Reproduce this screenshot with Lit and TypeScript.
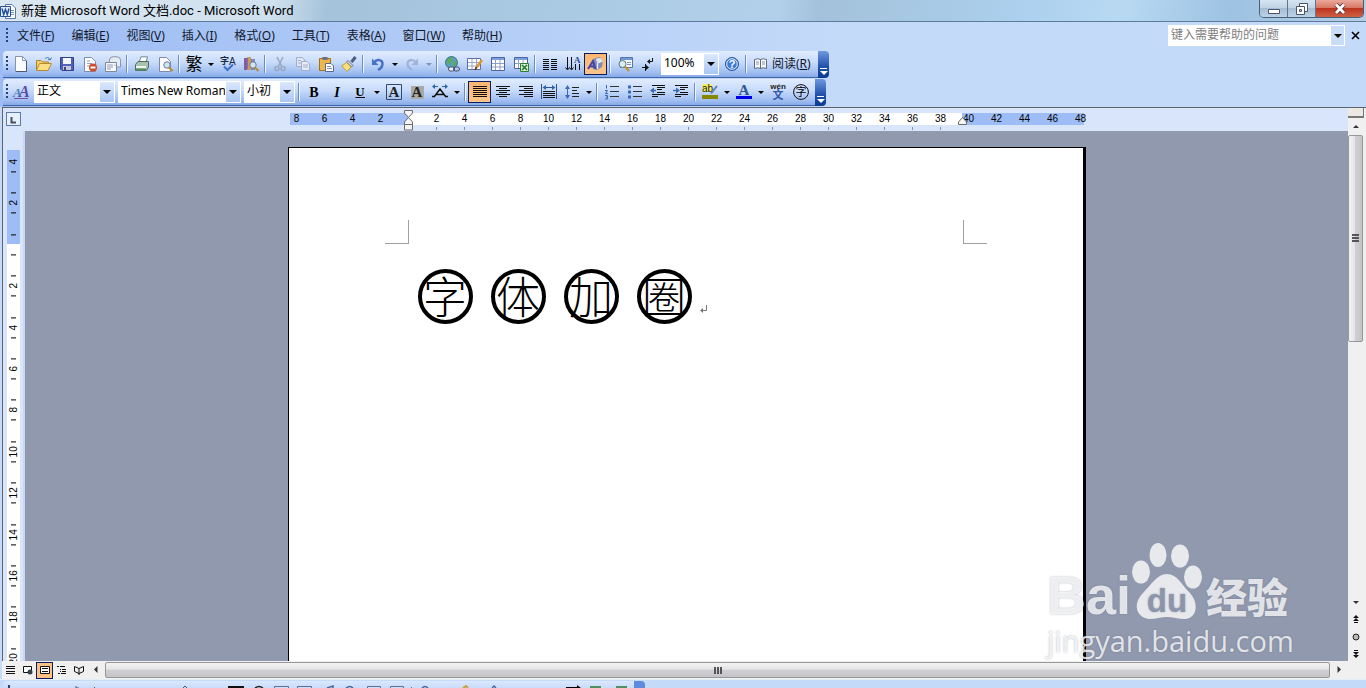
import { LitElement, html, css, svg, nothing } from "lit";
import { customElement, property } from "lit/decorators.js";
import { styleMap } from "lit/directives/style-map.js";

const line = (d: string, c = "#000", w = 1) =>
  svg`<path d=${d} fill="none" stroke=${c} stroke-width=${w}></path>`;
const fill = (d: string, c: string) => svg`<path d=${d} fill=${c}></path>`;
const shape = (d: string, f: string, s: string) =>
  svg`<path d=${d} fill=${f} stroke=${s}></path>`;

const sheet = shape("M2.500 1.500H9.500L13.500 5.500V15.500H2.500Z", "#fdfdff", "#7d8aa8");
const lens = svg`<circle cx="10" cy="9" r="3.200" fill="#cfe4f4" stroke="#6c7c8c"></circle>${line("M12 11.500L15.500 15", "#b98a2c", 2)}`;

const ICONS: Record<string, unknown> = {
  fresh: [shape("M2.500 .5H9.500L13.500 4.500V15.500H2.500Z", "#fbfcff", "#8893ad"), line("M9.500 .5V4.500H13.500", "#8893ad"), line("M13.500 5V15.500H3", "#4b5875")],
  open: [line("M9 3C10 1 13 1 14 3.500M15.500 1.500L14.300 4L12 3", "#4a78a8"), shape("M.5 13.500V4.500H5L6.500 6H12.500V8", "#f5d06c", "#ad8126"), shape("M.5 14.500L3.500 7.500H15.500L12 14.500Z", "#fbdd83", "#b98d2e")],
  save: [shape("M1.500 1.500H14.500V14.500H3L1.500 13Z", "#5360b4", "#343f8c"), fill("M4 2H12V8H4Z", "#f3f6ff"), fill("M4 10H12V14H4Z", "#c3c8de"), fill("M5 11H7V14H5Z", "#39437f")],
  perm: [sheet, line("M5 5H8M5 7.500H10M5 10H8", "#8fa3c4"), svg`<circle cx="11" cy="11.500" r="4" fill="#cf4b2b"></circle>`, fill("M8.500 10.500H13.500V12.500H8.500Z", "#fff")],
  mail: [shape("M4.500 7V4Q4.500 .8 8 .8H12Q15.500 1 15.500 4V11H10", "#e7ebf2", "#8b96aa"), shape("M.5 6.500H11.500V15.500H.5Z", "#fafbff", "#7c88a0"), line("M2 9H8M2 11H8M2 13H6M10 8.500V10", "#8f9bb0")],
  print: [shape("M5 6.500L7 .8H13.500L12 6.500Z", "#fff", "#6f8a93"), shape("M1.500 8.500L4 5.500H14.500L14.500 11L12.500 14.500H1.500Z", "#a7c3b0", "#4c6a60"), fill("M2 10H12V12H2Z", "#eef4ef"), fill("M2 12.500H12V14.500H2Z", "#588f62")],
  preview: [sheet, lens],
  trad: svg`<text x="8" y="14" text-anchor="middle" font-size="17" font-family="Noto Sans CJK SC, sans-serif">繁</text>`,
  spell: [svg`<text x="0" y="8" font-size="9" font-weight="700" font-family="Noto Sans CJK SC, sans-serif" fill="#1b2945">字</text><text x="9" y="9" font-size="10" font-family="Liberation Sans, sans-serif" fill="#1b2945">A</text>`, line("M4 10.500L7.500 14L13 8.500", "#3d6fc9", 2)],
  research: [fill("M1 2H4V14H1Z", "#8358a4"), fill("M4 1H8V14H4Z", "#c79c5a"), fill("M8 3H12V14H8Z", "#7d8dbd"), line("M4.500 2V13M8.500 3V13", "#8a7396"), lens],
  cut: [line("M5 1L9.500 10M11 1L6.500 10", "#9aa7c2", 1.6), svg`<circle cx="5" cy="12.500" r="2" fill="none" stroke="#9aa7c2" stroke-width="1.600"></circle><circle cx="11" cy="12.500" r="2" fill="none" stroke="#9aa7c2" stroke-width="1.600"></circle>`],
  copy: [shape("M1.500 1.500H7.500L9.500 4V10.500H1.500Z", "#dfe7f6", "#a3afca"), shape("M6.500 5.500H12L14.500 8V14.500H6.500Z", "#e6edf9", "#a3afca"), line("M8 9H13M8 11H13M3 4.500H6M3 7H6", "#a3afca")],
  paste: [shape("M1.500 2.500H12.500V14.500H1.500Z", "#f0b64a", "#a56f1c"), fill("M4.500 1H9.500V4H4.500Z", "#67718c"), shape("M7.500 7.500H13L15.500 10V15.500H7.500Z", "#fff", "#5a6a90"), line("M9 10.500H13M9 12.500H14", "#7f92bb")],
  brush: [line("M14.500 1L10.500 6", "#4d5a83", 3), shape("M7 4.500L12 9.500L10.500 11L5.500 6Z", "#cfd6e4", "#6b7389"), shape("M5.500 6.500L10 11L6 15.500L.8 10Z", "#f9e27d", "#c09a31")],
  undo: [line("M4 6.500C7 2.500 13 3.500 12.500 8.500Q12 12 8 14", "#4771c9", 2.4), fill("M2 2.500V9H8.500Z", "#4771c9")],
  redo: [line("M12 6.500C9 2.500 3 3.500 3.500 8.500Q4 12 8 14", "#9fb3d8", 2.2), fill("M14 2.500V9H7.500Z", "#9fb3d8")],
  link: [svg`<circle cx="7.500" cy="6.500" r="6" fill="#5a9fbd" stroke="#38718d"></circle>`, fill("M3 3Q7 0 9 3L7 7L3 8Z", "#5eaa5c"), fill("M9 6L13 5L12 9L9 11Z", "#5eaa5c"), svg`<rect x="4.500" y="11" width="6" height="4" rx="2" fill="#eef" stroke="#454f68"></rect><rect x="9.500" y="11" width="6" height="4" rx="2" fill="none" stroke="#454f68"></rect>`],
  tables: [shape("M.5 2.500H13.500V13.500H.5Z", "#fff", "#5d6fa0"), line("M1 6.500H13M1 10H13M5 3V13M9.500 3V13", "#9aa9cb"), line("M15 4L9 12", "#d99b33", 2.6), line("M9.500 11L8 14", "#503a20", 1.5)],
  table: [shape("M1.500 1.500H14.500V14.500H1.500Z", "#fff", "#4d64a1"), fill("M2 2H14V4H2Z", "#7c9fe0"), line("M2 7.500H14M2 11H14M5.500 4V14M10 4V14", "#8da0cb")],
  excel: [shape("M1.500 1.500H14.500V12.500H1.500Z", "#fff", "#4d64a1"), fill("M2 2H14V4H2Z", "#7c9fe0"), line("M2 7.500H14M5.500 4V12M10 4V12", "#8da0cb"), shape("M7.500 7.500H15.500V15.500H7.500Z", "#d9f0d2", "#2f7d35"), line("M9 9L14 14M14 9L9 14", "#1f7a2b", 1.6)],
  columns: line("M1 3.500H7M1 5.500H7M1 7.500H7M1 9.500H7M1 11.500H7M1 13.500H7M9 3.500H15M9 5.500H15M9 7.500H15M9 9.500H15M9 11.500H15M9 13.500H15", "#111"),
  vtext: [line("M2.500 1V13M6.500 1V13M10.500 8V14M14.500 8V14", "#111"), line("M.5 11.500L2.500 14L4.500 11.500M4.500 11.500L6.500 14L8.500 11.500", "#111"), svg`<text x="9" y="7" font-size="9" font-weight="700" font-family="Liberation Serif, serif" fill="#2e4b93">A</text>`],
  drawing: [fill("M4 8L7 2L12 1L15 5L14 11L9 14L5 13Z", "#7d8db8"), svg`<ellipse cx="11" cy="4" rx="3" ry="2" fill="#dfe6f5"></ellipse>`, line("M9.500 13V7L15 5", "#e8ecf6", 1.3), line("M0 13L5 5L7.500 13M2.500 10.500H7", "#4a45a8", 2)],
  docmap: [shape("M3.500 1.500H15.500V11.500H3.500Z", "#f3f7ff", "#5b74a4"), fill("M4 2H15V4H4Z", "#6f99d8"), line("M10 6.500H14M10 8.500H14", "#7f92bb"), svg`<circle cx="5.500" cy="8" r="3.500" fill="#d8efee" stroke="#5f7b80"></circle>`, line("M8 10.500L12 15", "#c49330", 2.2)],
  marks: [line("M12.500 2V5.500H8", "#111"), fill("M10 3V8L7 5.500Z", "#111"), line("M2 11.500H7M5.500 8V15", "#111"), fill("M6 9V14L9 11.500Z", "#111")],
  help: [svg`<circle cx="8" cy="8" r="6.500" fill="#3d7ad6" stroke="#2a5298"></circle><circle cx="8" cy="8" r="5.300" fill="none" stroke="#e8f1ff"></circle><text x="8" y="12" text-anchor="middle" font-size="11" font-weight="700" font-family="Liberation Sans, sans-serif" fill="#fff">?</text>`],
  book: [shape("M1.500 3.500Q5 2 7.500 3.500V12.500Q5 11 1.500 12.500ZM7.500 3.500Q10 2 13.500 3.500V12.500Q10 11 7.500 12.500Z", "#f6f8fc", "#5f6a7e"), line("M3 6H6M3 8H6M9 6H12M9 8H12", "#8a94a8")],
  styles: [svg`<text x="0" y="13" font-size="13" font-weight="700" font-style="italic" font-family="Liberation Serif, serif" fill="#4a7fb0">A</text><text x="6" y="13" font-size="16" font-weight="700" font-style="italic" font-family="Liberation Serif, serif" fill="#5a4ba8">A</text>`, line("M1 14.500H15", "#7a4ba8")],
  bold: svg`<text x="8" y="13" text-anchor="middle" font-size="14" font-weight="700" font-family="Liberation Serif, serif">B</text>`,
  italic: svg`<text x="8" y="13" text-anchor="middle" font-size="14" font-weight="700" font-style="italic" font-family="Liberation Serif, serif">I</text>`,
  under: [svg`<text x="8" y="12" text-anchor="middle" font-size="13" font-weight="700" font-family="Liberation Serif, serif">U</text>`, line("M3.500 13.500H13", "#000")],
  abox: [shape("M.5 .5H15.500V15.500H.5Z", "none", "#33486f"), svg`<text x="8" y="13" text-anchor="middle" font-size="15" font-weight="700" font-family="Liberation Serif, serif" fill="#222">A</text>`],
  ashade: [fill("M2 2H15V15H2Z", "#aaa9a6"), svg`<text x="8" y="13" text-anchor="middle" font-size="15" font-weight="700" font-family="Liberation Serif, serif" fill="#222">A</text>`],
  scale: [line("M1 2.500H6M10 2.500H15", "#2f65a8"), fill("M3 0V5L0 2.500ZM13 0V5L16 2.500Z", "#2f65a8"), line("M2 13L8 5L14 13M4 10.500H12M0 12.500H3M13 12.500H16", "#111", 1.5)],
  justify: line("M1 2.500H15M1 4.500H15M1 6.500H15M1 8.500H15M1 10.500H15M1 12.500H15", "#111"),
  center: line("M1 2.500H15M4 4.500H12M1 6.500H15M4 8.500H12M1 10.500H15M4 12.500H12", "#111"),
  right: line("M1 2.500H15M6 4.500H15M1 6.500H15M6 8.500H15M1 10.500H15M6 12.500H15", "#111"),
  dist: [line("M.5 0V15M15.500 0V15M2.500 3.500H13.500", "#2f4f88"), fill("M5 1V6L1.500 3.500ZM11 1V6L14.500 3.500Z", "#2f65a8"), line("M2 7.500H14M2 9.500H14M2 11.500H14M2 13.500H14", "#111")],
  spacing: [line("M3.500 3V13", "#3a6ab5"), fill("M1 5L3.500 1L6 5ZM1 11L3.500 15L6 11Z", "#3a6ab5"), line("M8 3.500H15M8 6.500H13M8 9.500H15M8 12.500H15", "#222")],
  numbers: [line("M2.500 1V4.500M1 6.500H3.500L1.500 9.500H4M1 11.500H3.500V15H1M2 13H3.500", "#3a6ab5"), line("M6 2.500H15M6 7.500H15M6 12.500H15", "#333")],
  bullets: [fill("M1 1.500H4V4.500H1ZM1 6.500H4V9.500H1ZM1 11.500H4V14.500H1Z", "#3a6ab5"), line("M6 2.500H15M6 7.500H15M6 12.500H15", "#333")],
  outdent: [line("M2 1.500H15M7 3.500H15M7 5.500H12M7 8.500H15M2 10.500H15M2 12.500H8", "#111"), line("M1 6.500H6", "#3a6ab5", 1.4), fill("M4 3.500V9.500L0 6.500Z", "#3a6ab5")],
  indent: [line("M2 1.500H15M7 3.500H15M7 5.500H12M7 8.500H15M2 10.500H15M2 12.500H8", "#111"), line("M0 6.500H4", "#3a6ab5", 1.4), fill("M3 3.500V9.500L7 6.500Z", "#3a6ab5")],
  mark: [fill("M0 0H10V8H0Z", "#f4ee63"), svg`<text x="0" y="8" font-size="10" font-family="Liberation Sans, sans-serif" fill="#222">ab</text>`, line("M15 2L9 9.500", "#5c82b0", 2), fill("M0 11H16V15H0Z", "#878800")],
  color: [svg`<text x="8" y="11" text-anchor="middle" font-size="15" font-weight="700" font-family="Liberation Serif, serif" fill="#2f5590">A</text>`, fill("M0 12H16V15H0Z", "#0000e8")],
  pinyin: svg`<text x="8" y="5" text-anchor="middle" font-size="8" font-weight="700" font-family="Liberation Sans, sans-serif" fill="#222">wén</text><text x="8" y="15" text-anchor="middle" font-size="11" font-weight="700" font-family="Noto Sans CJK SC, sans-serif" fill="#3558a8">文</text>`,
  enclose: svg`<circle cx="8" cy="8" r="7.400" fill="none" stroke="#111"></circle><text x="8" y="12" text-anchor="middle" font-size="11" font-family="Noto Sans CJK SC, sans-serif">字</text>`,
  vNormal: line("M3 4.500H12M3 6.500H12M3 9.500H12M3 11.500H12", "#111"),
  vWeb: [shape("M3.500 4.500H11.500V10.500H3.500Z", "#fff", "#111"), svg`<circle cx="10" cy="10" r="2.500" fill="#36424a"></circle>`],
  vPrint: [shape("M3.500 4.500H12.500V11.500H3.500Z", "#fff", "#111"), line("M5 6.500H11M5 9.500H11", "#111")],
  vOutline: line("M3 4.500H5M6 4.500H11M6 7.500H7M8 7.500H12M6 9.500H7M8 9.500H12M4 11.500H6M7 11.500H12", "#111"),
  vRead: line("M3.500 4.500L8 6.500L12.500 4.500V9.500L8 11.500L3.500 9.500ZM8 6.500V13", "#111"),
  pgUp: [fill("M8 3L11 6H5ZM8 6L11 9H5Z", "#111"), line("M6 10.500H10", "#111")],
  browse: svg`<circle cx="8" cy="8" r="3" fill="#b8b8b4" stroke="#222"></circle>`,
  pgDown: [fill("M8 12L11 9H5ZM8 9L11 6H5Z", "#111"), line("M6 4.500H10", "#111")],
  up: fill("M8 6L11 9H5Z", "#333"),
  down: fill("M8 9L11 6H5Z", "#333"),
  prev: fill("M6 7.500L9.500 4V11Z", "#333"),
  next: fill("M10 7.500L6.500 4V11Z", "#333"),
};

const icon = (name: string) =>
  html`<svg class="icon" width="16" height="16" viewBox="0 0 16 16" aria-hidden="true">${ICONS[name]}</svg>`;

const base = css`
  * { box-sizing: border-box; }
  button { border: 0; padding: 0; margin: 0; background: none; font: inherit; color: inherit; }
  .icon { display: block; flex: none; overflow: visible; }
`;

type Tool =
  | { k: "b"; i: string; t: string; on?: boolean }
  | { k: "d"; t: string; dim?: boolean }
  | { k: "s" }
  | { k: "c"; v: string; t: string; w: number }
  | { k: "read" };

const b = (i: string, t: string, on = false): Tool => ({ k: "b", i, t, on });
const d = (t: string, dim = false): Tool => ({ k: "d", t, dim });
const s: Tool = { k: "s" };
const c = (v: string, t: string, w: number): Tool => ({ k: "c", v, t, w });

const STANDARD: Tool[] = [
  b("fresh", "新建"), b("open", "打开"), b("save", "保存"), b("perm", "权限"), b("mail", "电子邮件"), s,
  b("print", "打印"), b("preview", "打印预览"), s,
  b("trad", "中文简繁转换"), d("简繁选项"), b("spell", "拼写和语法"), b("research", "信息检索"), s,
  b("cut", "剪切"), b("copy", "复制"), b("paste", "粘贴"), b("brush", "格式刷"), s,
  b("undo", "撤消"), d("撤消列表"), b("redo", "恢复"), d("恢复列表", true), s,
  b("link", "插入超链接"), b("tables", "表格和边框"), b("table", "插入表格"), b("excel", "插入 Excel 工作表"), s,
  b("columns", "分栏"), b("vtext", "更改文字方向"), b("drawing", "绘图", true), s,
  b("docmap", "文档结构图"), b("marks", "显示编辑标记"), c("100%", "显示比例", 58), b("help", "帮助"), s, { k: "read" },
];

const FORMATTING: Tool[] = [
  b("styles", "格式窗格"), c("正文", "样式", 81), c("Times New Roman", "字体", 123), c("小初", "字号", 51), s,
  b("bold", "加粗"), b("italic", "倾斜"), b("under", "下划线"), d("下划线样式"),
  b("abox", "字符边框"), b("ashade", "字符底纹"), b("scale", "字符缩放"), d("缩放比例"), s,
  b("justify", "两端对齐", true), b("center", "居中"), b("right", "右对齐"), b("dist", "分散对齐"), b("spacing", "行距"), d("行距选项"), s,
  b("numbers", "编号"), b("bullets", "项目符号"), b("outdent", "减少缩进量"), b("indent", "增加缩进量"), s,
  b("mark", "突出显示"), d("突出显示颜色"), b("color", "字体颜色"), d("字体颜色列表"), b("pinyin", "拼音指南"), b("enclose", "带圈字符"),
];

@customElement("word-toolbar")
class WordToolbar extends LitElement {
  @property({ attribute: false }) tools: Tool[] = [];
  @property() name = "";

  static styles = [base, css`
    :host { display: flex; padding-left: 3px; font: 12px/16px "Noto Sans", "Noto Sans CJK SC", sans-serif; color: #10182a; }
    .bar { display: flex; align-items: center; height: 27px; padding-right: 3px; border-bottom: 1px solid #3f66a6; border-radius: 4px 0 0 0;
      background: linear-gradient(#e1ecfe, #c6dafa 45%, #9dbcf0 85%, #86a9e6); }
    .grip { width: 6px; height: 16px; padding-left: 3px; }
    .grip::before { content: ""; display: block; width: 2px; height: 15px; background: repeating-linear-gradient(#27417c 0 2px, transparent 2px 4px); }
    .tool { width: 23px; height: 22px; display: flex; align-items: center; justify-content: center; }
    .on { border: 1px solid #0b1c66; background: linear-gradient(#fdb770, #fcc58c); }
    .drop { width: 11px; height: 22px; display: flex; align-items: center; justify-content: center; }
    .tri { display: block; border: 3px solid transparent; border-top-color: #000; border-bottom: 0; }
    .dim .tri { border-top-color: #7c93bd; }
    .sep { width: 6px; height: 18px; padding-left: 2px; }
    .sep::before { content: ""; display: block; width: 2px; height: 18px; background: linear-gradient(90deg, #6a8cc8 50%, #f1f6ff 50%); }
    .combo { display: grid; height: 22px; margin: 0 1px 0 2px; background: #fff; }
    .combo > * { grid-area: 1 / 1; }
    select { appearance: none; border: 0; border-radius: 0; background: none; width: 100%; padding: 0 16px 2px 3px; font: inherit; color: #000; outline: 0; }
    .pick { justify-self: end; width: 14px; margin: 1px; background: linear-gradient(#dce9fd, #a9c6f3); display: flex; align-items: center; justify-content: center; pointer-events: none; }
    .pick .tri { border-width: 4px 4px 0; }
    .read { display: flex; align-items: center; gap: 3px; height: 22px; padding: 0 4px; }
    .cap { width: 11px; height: 27px; border-radius: 0 4px 4px 0; background: linear-gradient(#6f98e0, #1f4fa8 60%, #0c3a92); display: flex; align-items: flex-end; justify-content: center; padding-bottom: 3px; }
    .cap span { width: 7px; padding-top: 2px; border-top: 1px solid #fff; }
    .cap .tri { border-top-color: #fff; border-width: 4px 4px 0; }
  `];

  private tool(t: Tool) {
    switch (t.k) {
      case "b": return html`<button class="tool ${t.on ? "on" : ""}" aria-label=${t.t}>${icon(t.i)}</button>`;
      case "d": return html`<button class="drop ${t.dim ? "dim" : ""}" aria-label=${t.t}><i class="tri"></i></button>`;
      case "s": return html`<span class="sep"></span>`;
      case "c": return html`<label class="combo" style=${styleMap({ width: t.w + "px" })}>
        <select aria-label=${t.t}><option>${t.v}</option></select><span class="pick"><i class="tri"></i></span></label>`;
      default: return html`<button class="read">${icon("book")}<span>阅读(<u>R</u>)</span></button>`;
    }
  }

  render() {
    return html`<div class="bar" role="toolbar" aria-label=${this.name}><span class="grip"></span>${this.tools.map((t) => this.tool(t))}</div>
      <button class="cap" aria-label="工具栏选项"><span><i class="tri"></i></span></button>`;
  }
}

const MENUS: [string, string][] = [
  ["文件", "F"], ["编辑", "E"], ["视图", "V"], ["插入", "I"], ["格式", "O"], ["工具", "T"], ["表格", "A"], ["窗口", "W"], ["帮助", "H"],
];
const H_LABELS = Array.from({ length: 29 }, (_, i) => i * 2 - 8);
const V_LABELS = Array.from({ length: 13 }, (_, i) => i * 2 - 4);

@customElement("app-root")
class AppRoot extends LitElement {
  static styles = [base, css`
    :host { display: flex; flex-direction: column; height: 100vh; overflow: hidden; position: relative; background: #c4daf9;
      font: 12px/16px "Noto Sans", "Noto Sans CJK SC", sans-serif; color: #10182a; }
    .title { display: flex; height: 22px; flex: none; border-bottom: 1px solid #5d7a9c;
      background: linear-gradient(100deg, #dbe8f2 0, #cfe0ee 20%, #a5c3da 24%, #a9c9e3 40%, #b2d0ea 57%, #a3c1da 60%, #acd0ee 75%, #b9d9f3 82%, #9dc2e2 90%, #b5cfe4); }
    .caption { display: flex; align-items: center; gap: 5px; flex: 1; min-width: 0; color: #000; }
    h1 { font: 13px/16px Roboto, "Noto Sans CJK SC", sans-serif; margin: 0; white-space: nowrap; }
    .frame { display: flex; height: 18px; margin-right: 2px; border: 1px solid #46607a; border-top: 0; border-radius: 0 0 5px 5px; overflow: hidden; }
    .frame button { width: 28px; display: flex; align-items: center; justify-content: center; background: linear-gradient(#d7e5f1, #c0d3e4 45%, #a5bdd3 50%, #bcd3e6); border-right: 1px solid #5c768f; }
    .frame .close { width: 47px; border: 0; background: linear-gradient(#e9a89b, #d87866 45%, #bd3320 50%, #cf6045); }
    .dock { flex: none; background: linear-gradient(90deg, #9dbcf4, #c4daf9 62%); }
    .menu { display: flex; align-items: center; height: 29px; padding-bottom: 2px; }
    .grip { width: 13px; padding-left: 6px; }
    .grip::before { content: ""; display: block; width: 2px; height: 15px; background: repeating-linear-gradient(#27417c 0 2px, transparent 2px 4px); }
    .menu nav { display: flex; gap: 17px; flex: 1; padding-left: 4px; }
    .ask { display: flex; width: 177px; height: 21px; background: #fff; padding: 1px; }
    .ask input { flex: 1; min-width: 0; border: 0; padding: 0 2px 2px; background: none; font: inherit; outline: 0; }
    .ask input::placeholder { color: #808080; }
    .ask button { width: 13px; background: #c9dcf8; display: flex; align-items: center; justify-content: center; }
    .tri { display: block; border: 4px solid transparent; border-top-color: #000; border-bottom: 0; }
    .shut { width: 21px; height: 16px; display: flex; align-items: center; justify-content: center; }
    .rows { display: grid; gap: 1px; padding-bottom: 1px; }
    .pane { flex: 1; min-height: 0; display: flex; margin-left: 2px; border: 1px solid #60646c; border-width: 1px 0 0 1px; }
    .left { flex: 1; min-width: 0; display: grid; grid-template: 23px minmax(0, 1fr) 18px / 22px minmax(0, 1fr); background: #d8e5fb; }
    .corner { display: flex; align-items: flex-start; padding: 4px 0 0 3px; }
    .tab { width: 15px; height: 14px; border: 1px solid #5e7ba8; background: #e6effd; display: flex; align-items: center; justify-content: center; padding-top: 2px; }
    .hruler { display: flex; justify-content: center; overflow: hidden; }
    .hscale { position: relative; width: 798px; flex: none; padding-top: 5px; }
    .labels { display: flex; width: 812px; margin-left: -5px; font: 10px/12px "Liberation Sans", sans-serif; color: #000;
      background: linear-gradient(90deg, transparent 7px, #9ebdf6 7px 125px, #fff 125px 679px, #9ebdf6 679px 801px, transparent 801px); }
    .labels span { width: 28px; height: 12px; text-align: center; }
    .ticks { width: 532px; height: 3px; margin: 2px 0 0 148px; background: repeating-linear-gradient(90deg, #7f93b8 0 1px, transparent 1px 28px); }
    .first, .last { position: absolute; top: 2px; left: 115px; }
    .last { left: 669px; }
    .vruler { overflow: hidden; padding: 10px 0 0 4px; background: linear-gradient(90deg, transparent 20px, #c8d8f2 20px); }
    .vscale { width: 13px; height: 538px; display: flex; flex-direction: column; font: 10px/13px "Liberation Sans", sans-serif; color: #000;
      background: linear-gradient(transparent 9px, #9ebdf6 9px 103px, #fff 103px); }
    .vscale div { flex: 1; display: flex; flex-direction: column; align-items: center; justify-content: center; writing-mode: vertical-rl; transform: rotate(180deg);
      background: linear-gradient(#000, #000) center 25% / 5px 1px no-repeat, linear-gradient(#000, #000) center 75% / 5px 1px no-repeat; }
    .vscale .edge { background: linear-gradient(#000, #000) center 25% / 5px 1px no-repeat; }
    .desk { background: #9199ae; overflow: hidden; display: flex; justify-content: center; padding-top: 16px; }
    .page { width: 798px; flex: none; background: #fff; border: 1px solid #000; border-width: 1px 3px 0 1px; padding: 72px 96px; }
    .marks { display: flex; justify-content: space-between; }
    .marks i { width: 24px; height: 24px; border: solid #a0a0a0; border-width: 0 1px 1px 0; }
    .marks i + i { border-width: 0 0 1px 1px; }
    .text { display: flex; align-items: center; gap: 18px; margin: 25px 0 0 33px; font: 300 44px/44px "Noto Sans CJK SC", sans-serif; color: #000; }
    .ring { width: 55px; height: 55px; border: 4px solid #000; border-radius: 50%; padding-bottom: 4px; display: flex; align-items: center; justify-content: center; }
    .return { margin: 26px 0 0 -10px; }
    .foot { grid-column: 1 / 3; display: flex; align-items: center; background: #f0f0f0; margin-left: -1px; }
    .foot button { width: 17px; height: 17px; display: flex; align-items: center; justify-content: center; }
    .foot .on { background: #fdc283; border: 1px solid #0b1c66; }
    .foot .arrow { width: 18px; }
    .hthumb { flex: 1; height: 16px; border: 1px solid #979797; border-radius: 2px; background: linear-gradient(#f3f3f3, #e4e4e6 45%, #cfcfd3 50%, #c4c4c9); display: flex; align-items: center; justify-content: center; }
    .hthumb::before { content: ""; width: 8px; height: 7px; background: repeating-linear-gradient(90deg, #555 0 2px, transparent 2px 3px); }
    .bars { width: 18px; display: flex; flex-direction: column; align-items: flex-start; background: #f0f0f0; padding-bottom: 17px; }
    .bars button { width: 16px; height: 17px; }
    .split { height: 10px; width: 16px; border: 1px solid #777; border-width: 0 1px 2px 0; background: #ece9e4; }
    .track { flex: 1; width: 15px; }
    .vthumb { height: 45%; border: 1px solid #979797; border-radius: 2px; background: linear-gradient(90deg, #f3f3f3, #e4e4e6 45%, #cfcfd3 50%, #c4c4c9); display: flex; align-items: center; justify-content: center; }
    .vthumb::before { content: ""; width: 7px; height: 8px; background: repeating-linear-gradient(#555 0 2px, transparent 2px 3px); }
    .lower { flex: none; height: 9px; display: flex; padding: 1px 0 0 3px; overflow: hidden; border-top: 1px solid #e8eef8; }
    .strip { width: 631px; background: linear-gradient(#dbe8fd, #c9dcfa); border-radius: 4px 0 0 0; }
    .strip svg { display: block; }
    .cap { width: 11px; background: #5f8bdc; border-radius: 0 4px 0 0; }
    .brand { position: absolute; right: 75px; bottom: 30px; width: 244px; color: rgba(255, 255, 255, .78); text-shadow: 0 0 2px rgba(90, 98, 120, .5); pointer-events: none; }
    .logo { display: flex; align-items: flex-end; height: 84px; padding-bottom: 4px; }
    .bai { font: 700 54px/50px "Liberation Sans", sans-serif; }
    .exp { font: 900 41px/50px "Noto Sans CJK SC", sans-serif; margin-left: 3px; }
    .site { font: 29px/34px "Open Sans", sans-serif; }
    .paw { flex: none; }
  `];

  render() {
    return html`
      <header class="title">
        <div class="caption">
          <svg class="icon" width="16" height="16" viewBox="0 0 16 16" aria-hidden="true">
            ${shape("M5.500 1.500H12L15.500 5V15.500H5.500Z", "#fff", "#5877a8")}${line("M10 7.500H14M10 9.500H14M10 11.500H14", "#7b93bd")}
            ${shape("M.5 3.500H10.500V13.500H.5Z", "#e4eefb", "#26508f")}${line("M2 5.500L3.700 11.500L5.500 6.500L7.300 11.500L9 5.500", "#24529c", 1.500)}
          </svg>
          <h1>新建 Microsoft Word 文档.doc - Microsoft Word</h1>
        </div>
        <div class="frame">
          <button aria-label="最小化"><svg width="14" height="12" viewBox="0 0 14 12">${shape("M1.500 6.500H12.500V10.500H1.500Z", "#fff", "#4a5568")}</svg></button>
          <button aria-label="还原"><svg width="14" height="14" viewBox="0 0 14 14">${shape("M4.500 1.500H12.500V9.500H4.500Z", "#fff", "#4a5568")}${shape("M1.500 4.500H9.500V12.500H1.500Z", "#fff", "#4a5568")}${shape("M4.500 7.500H6.500V9.500H4.500Z", "#b9cde0", "#4a5568")}</svg></button>
          <button class="close" aria-label="关闭"><svg width="14" height="12" viewBox="0 0 14 12">${line("M3 1.500L11 10M11 1.500L3 10", "#5a2a2a", 4.500)}${line("M3 1.500L11 10M11 1.500L3 10", "#fff", 2.800)}</svg></button>
        </div>
      </header>
      <div class="dock">
        <div class="menu">
          <span class="grip"></span>
          <nav>${MENUS.map(([t, k]) => html`<button>${t}(<u>${k}</u>)</button>`)}</nav>
          <div class="ask"><input aria-label="帮助" placeholder="键入需要帮助的问题" /><button aria-label="列表"><i class="tri"></i></button></div>
          <button class="shut" aria-label="关闭窗口"><svg width="9" height="9" viewBox="0 0 9 9">${line("M1 1L8 8M8 1L1 8", "#000", 1.600)}</svg></button>
        </div>
        <div class="rows">
          <word-toolbar name="常用" .tools=${STANDARD}></word-toolbar>
          <word-toolbar name="格式" .tools=${FORMATTING}></word-toolbar>
        </div>
      </div>
      <main class="pane">
        <div class="left">
          <div class="corner"><button class="tab" aria-label="制表符"><svg width="7" height="7" viewBox="0 0 7 7">${line("M1.500 0V5.500H6", "#4a4f5c", 2)}</svg></button></div>
          <div class="hruler"><div class="hscale">
            <div class="labels">${H_LABELS.map((n) => html`<span>${n === 0 ? nothing : Math.abs(n)}</span>`)}</div>
            <div class="ticks"></div>
            <svg class="first" width="11" height="21" viewBox="0 0 11 21">${shape("M1.500 .5H9.500V3L5.500 7.500L1.500 3Z", "#f4f4f4", "#6b6b6b")}${shape("M5.500 7.500L9.500 12V14.500H1.500V12Z", "#f4f4f4", "#6b6b6b")}${shape("M1.500 14.500H9.500V20H1.500Z", "#f4f4f4", "#6b6b6b")}</svg>
            <svg class="last" width="11" height="21" viewBox="0 0 11 21">${shape("M5.500 7.500L9.500 12V14.500H1.500V12Z", "#f4f4f4", "#6b6b6b")}</svg>
          </div></div>
          <div class="vruler"><div class="vscale">${V_LABELS.map((n) => html`<div class=${n === -4 ? "edge" : ""}>${n === 0 ? nothing : Math.abs(n)}</div>`)}</div></div>
          <div class="desk"><article class="page">
            <div class="marks"><i></i><i></i></div>
            <div class="text">${[..."字体加圈"].map((ch) => html`<span class="ring">${ch}</span>`)}
              <svg class="return" width="8" height="9" viewBox="0 0 8 9">${line("M6.500 0V5.500H2", "#777")}${fill("M3 3V8L0 5.500Z", "#777")}</svg></div>
          </article></div>
          <div class="foot">
            <button aria-label="普通视图">${icon("vNormal")}</button><button aria-label="Web 版式">${icon("vWeb")}</button>
            <button class="on" aria-label="页面视图">${icon("vPrint")}</button><button aria-label="大纲视图">${icon("vOutline")}</button>
            <button aria-label="阅读版式">${icon("vRead")}</button><button class="arrow" aria-label="向左">${icon("prev")}</button>
            <div class="hthumb"></div><button class="arrow" aria-label="向右">${icon("next")}</button>
          </div>
        </div>
        <div class="bars">
          <span class="split"></span><button aria-label="向上">${icon("up")}</button>
          <div class="track"><div class="vthumb"></div></div>
          <button aria-label="向下">${icon("down")}</button><button aria-label="前一页">${icon("pgUp")}</button>
          <button aria-label="选择浏览对象">${icon("browse")}</button><button aria-label="下一页">${icon("pgDown")}</button>
        </div>
      </main>
      <footer class="lower">
        <div class="strip"><svg width="631" height="7" viewBox="3 0 631 7" aria-hidden="true">
          ${fill("M8 4H10V7H8Z", "#27417c")}${line("M76 5V7L79 7M94.500 6V7M183 7L185 5L187 7", "#44567e")}
          ${fill("M228 5H244V7H228Z", "#111")}${line("M255 7Q259 4 263 7", "#222", 1.500)}
          ${line("M274.500 7V5.500H288.500V7M297.500 7V5.500H311.500V7M367.500 7V5.500H380.500V7M390.500 7V5.500H403.500V7M411.500 6V7", "#5d6f96")}
          ${line("M327 7L333 5V7M346 7Q350 4 353 7M422 7Q425 4 428 7M492 7L494 5L496 7", "#4a669e", 1.500)}${line("M463 7L466 5L468 7", "#c8a337", 2)}
          ${fill("M566 6H577V4L581 7H566Z", "#000")}${line("M590 6H601M616 6H627", "#4f8f62", 2)}
        </svg></div><div class="cap"></div>
      </footer>
      <div class="brand">
        <div class="logo"><span class="bai">Bai</span>
          <svg class="paw" width="72" height="78" viewBox="0 0 72 78" aria-label="du">
            <g fill="#fff" fill-opacity=".78"><ellipse cx="10" cy="30" rx="9" ry="11.500"></ellipse><ellipse cx="27" cy="13" rx="8.500" ry="12"></ellipse><ellipse cx="49" cy="14" rx="9" ry="11.500"></ellipse><ellipse cx="62" cy="35" rx="9" ry="11.500"></ellipse>
            <path d="M36 32C46 32 50 42 58 50C68 60 67 76 54 77C47 77 42 75 36 75C30 75 25 77 18 77C4 75 2 61 12 51C21 42 26 32 36 32Z"></path></g>
            <text x="36" y="70" text-anchor="middle" font-size="33" font-weight="700" font-family="Liberation Sans, sans-serif" fill="#8d95ab">du</text>
          </svg><span class="exp">经验</span></div>
        <div class="site">jingyan.baidu.com</div>
      </div>`;
  }
}
